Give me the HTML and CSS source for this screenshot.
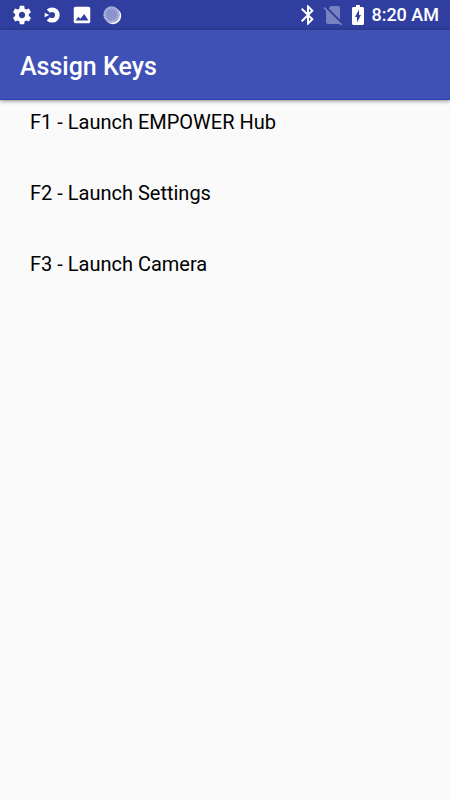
FILE: index.html
```html
<!DOCTYPE html>
<html lang="en">
<head>
<meta charset="utf-8">
<meta name="viewport" content="width=device-width, initial-scale=1">
<title>Assign Keys</title>
<link rel="stylesheet" href="styles.css">
</head>
<body>
<div class="status-bar">
  <div class="notifications">
    <svg class="icon" viewBox="0 0 24 24" aria-hidden="true"><path d="M19.43 12.98c.04-.32.07-.64.07-.98s-.03-.66-.07-.98l2.11-1.65c.19-.15.24-.42.12-.64l-2-3.46c-.12-.22-.39-.3-.61-.22l-2.49 1c-.52-.4-1.08-.73-1.69-.98l-.38-2.65C14.46 2.18 14.25 2 14 2h-4c-.25 0-.46.18-.49.42l-.38 2.65c-.61.25-1.17.59-1.69.98l-2.49-1c-.23-.09-.49 0-.61.22l-2 3.46c-.13.22-.07.49.12.64l2.11 1.65c-.04.32-.07.65-.07.98s.03.66.07.98l-2.11 1.65c-.19.15-.24.42-.12.64l2 3.46c.12.22.39.3.61.22l2.49-1c.52.4 1.08.73 1.69.98l.38 2.65c.03.24.24.42.49.42h4c.25 0 .46-.18.49-.42l.38-2.65c.61-.25 1.17-.59 1.69-.98l2.49 1c.23.09.49 0 .61-.22l2-3.46c.12-.22.07-.49-.12-.64l-2.11-1.65zM12 15.5c-1.93 0-3.5-1.57-3.5-3.5s1.57-3.5 3.5-3.5 3.5 1.57 3.5 3.5-1.57 3.5-3.5 3.5z"/></svg>
    <svg class="icon" viewBox="0 0 24 24" aria-hidden="true"><path class="ring" d="M8 7.900A5.800 5.800 0 1 1 8 16.100"/><path d="M4 9.500 9 12l-5 2.500z"/></svg>
    <svg class="icon" viewBox="0 0 24 24" aria-hidden="true"><path d="M21 19V5c0-1.100-.9-2-2-2H5c-1.100 0-2 .9-2 2v14c0 1.100.9 2 2 2h14c1.100 0 2-.9 2-2zM5 18l3-4 2.200 2.200L14.500 11l4.500 7z"/></svg>
    <svg class="icon" viewBox="0 0 24 24" aria-hidden="true"><circle cx="13" cy="13" r="9"/><circle class="disc" cx="11.500" cy="11.500" r="9"/><circle class="ticks" cx="11.500" cy="11.500" r="7.500"/></svg>
  </div>
  <div class="system">
    <svg class="icon" viewBox="0 0 24 24" aria-hidden="true"><path d="M17.710 7.710 12 2h-1v7.590L6.410 5 5 6.410 10.590 12 5 17.590 6.410 19 11 14.410V22h1l5.710-5.710-4.300-4.290 4.300-4.290zM13 5.830l1.880 1.880L13 9.590V5.830zm1.880 10.460L13 18.170v-3.760l1.880 1.880z"/></svg>
    <svg class="icon faded" viewBox="0 0 24 24" aria-hidden="true"><path d="M19 5c0-1.100-.9-2-2-2h-7L7.660 5.340 19 16.680zM3.650 3.880 2.380 5.150 5 7.770V19c0 1.100.9 2 2 2h10c.35 0 .67-.1.960-.26l1.880 1.880 1.270-1.270z"/></svg>
    <svg class="icon" viewBox="0 0 24 24" aria-hidden="true"><path d="M16.500 4H14V2h-4v2H7.500C6.600 4 6 4.600 6 5.500v15c0 .9.600 1.500 1.500 1.500h9c.9 0 1.500-.6 1.500-1.500v-15c0-.9-.6-1.500-1.500-1.500zM11 19.500V14H9L13 6.500V12h2z"/></svg>
    <time class="clock" datetime="08:20">8:20 AM</time>
  </div>
</div>
<header class="app-bar">
  <h1 class="title">Assign Keys</h1>
</header>
<main>
  <ul class="keys">
    <li><button class="key" type="button">F1 - Launch EMPOWER Hub</button></li>
    <li><button class="key" type="button">F2 - Launch Settings</button></li>
    <li><button class="key" type="button">F3 - Launch Camera</button></li>
  </ul>
</main>
</body>
</html>
```
FILE: styles.css
```css
* {
  box-sizing: border-box;
}

body {
  margin: 0;
  background: #fafafa;
  color: #000;
  font-family: Roboto, sans-serif;
}

.status-bar {
  display: flex;
  justify-content: space-between;
  align-items: center;
  height: 30px;
  padding: 0 11px;
  background: #303f9f;
  color: #fff;
}

.notifications,
.system {
  display: flex;
  align-items: center;
}

.notifications {
  gap: 8px;
}

.system {
  gap: 1px;
}

.icon {
  width: 22px;
  height: 22px;
  fill: #fff;
}

.system .icon {
  width: 24px;
  height: 24px;
}

.faded {
  opacity: 0.35;
}

.ring {
  fill: none;
  stroke: #fff;
  stroke-width: 5;
}

.disc {
  fill: #8b94cb;
}

.ticks {
  fill: none;
  stroke: #c5cae8;
  stroke-width: 2;
  stroke-dasharray: 1 1;
}

.clock {
  font-size: 18px;
  font-weight: 500;
  line-height: 30px;
}

.app-bar {
  display: flex;
  align-items: center;
  height: 70px;
  padding: 0 20px;
  border-bottom: 1px solid #2b3fae;
  background: #3f51b5;
  box-shadow: 0 1px 4px rgba(0, 0, 0, 0.45);
  color: #fff;
}

.title {
  margin: 0;
  padding-top: 4px;
  font-size: 25px;
  font-weight: 500;
  line-height: 32px;
}

.keys {
  display: grid;
  gap: 27px;
  margin: 0;
  padding: 0;
  list-style: none;
}

.key {
  display: block;
  width: 100%;
  padding: 0 30px;
  border: 0;
  background: none;
  color: inherit;
  font-family: inherit;
  font-size: 20px;
  line-height: 44px;
  text-align: left;
}
```
